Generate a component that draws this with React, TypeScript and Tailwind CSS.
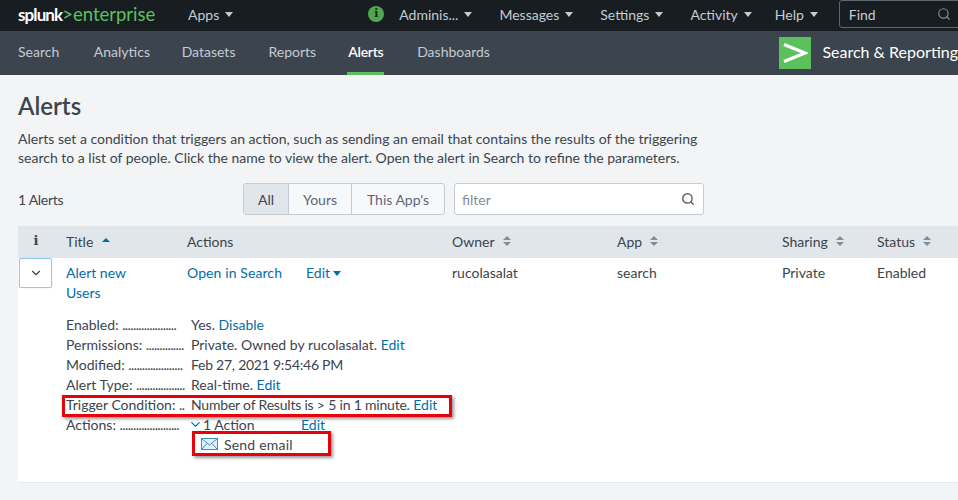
import { ChevronDown, Search } from 'lucide-react';

const font = { fontFamily: 'Lato, "Open Sans", sans-serif' };

function Caret({ className = 'border-t-[#c3cbd4]' }: { className?: string }) {
  return <span className={`inline-block w-0 h-0 border-x-[4px] border-x-transparent border-t-[5px] ${className}`} />;
}

function SortIcon() {
  return (
    <span className="inline-flex flex-col gap-[2px] ml-2">
      <span className="w-0 h-0 border-x-[4px] border-x-transparent border-b-[4px] border-b-[#818d99]" />
      <span className="w-0 h-0 border-x-[4px] border-x-transparent border-t-[4px] border-t-[#818d99]" />
    </span>
  );
}

function TopLink({ label, className = '' }: { label: string; className?: string }) {
  return (
    <div className={`flex items-center gap-[6px] text-[14px] text-[#c3cbd4] ${className}`}>
      <span>{label}</span>
      <Caret />
    </div>
  );
}

function Detail({ label, dots, children }: { label: string; dots: string; children: React.ReactNode }) {
  return (
    <div className="flex h-5 items-center text-[14px] text-[#3c444d] whitespace-nowrap">
      <div className="w-[120px] mr-[5px]">{label} <span className="tracking-[-0.6px]">{dots}</span></div>
      <div>{children}</div>
    </div>
  );
}

const Link = ({ children, className = '' }: { children: React.ReactNode; className?: string }) => (
  <a className={`text-[#006eaa] ${className}`}>{children}</a>
);

export default function App() {
  return (
    <div className="relative w-[958px] h-[500px] overflow-hidden bg-[#f2f4f5]" style={font}>
      <div className="flex items-center h-[31px] bg-[#171d21] pl-[18px] pb-[3px]">
        <div className="w-[170px] shrink-0 leading-none whitespace-nowrap">
          <span className="text-[17px] font-bold tracking-[-0.9px] text-white">splunk</span>
          <span className="text-[18.5px] text-[#5cc05c]">&gt;enterprise</span>
        </div>
        <TopLink label="Apps" />
        <div className="ml-[135px] w-4 h-4 shrink-0 rounded-full bg-[#4fa84f] flex items-center justify-center text-[11px] font-bold text-[#171d21]" style={{ fontFamily: '"DejaVu Serif", serif' }}>i</div>
        <TopLink label="Adminis..." className="ml-[15px]" />
        <TopLink label="Messages" className="ml-[27px]" />
        <TopLink label="Settings" className="ml-[27px]" />
        <TopLink label="Activity" className="ml-[27px]" />
        <TopLink label="Help" className="ml-[23px]" />
        <div className="ml-[21px] shrink-0 flex items-center justify-between w-[125px] h-[28px] border border-[#5c6773] rounded-[3px] pl-[9px] pr-3 text-[14px] text-[#c3cbd4]">
          <span>Find</span>
          <Search size={14} className="text-[#818d99]" />
        </div>
      </div>

      <div className="flex items-center h-[44px] bg-[#3c444d] pl-[18px] text-[14px] text-[#c3cbd4] whitespace-nowrap">
        <span className="w-[76px] pb-[3px]">Search</span>
        <span className="w-[88px] pb-[3px]">Analytics</span>
        <span className="w-[87px] pb-[3px]">Datasets</span>
        <span className="w-[79px] pb-[3px]">Reports</span>
        <span className="w-[70px] h-full flex items-center">
          <span className="h-full flex items-center px-[1px] border-b-[3px] border-[#5cc05c] tracking-[-0.3px] font-semibold text-white">Alerts</span>
        </span>
        <span className="w-[363px] pb-[3px]">Dashboards</span>
        <div className="flex items-center justify-center w-8 h-8 bg-[#5cc05c] shrink-0">
          <svg width="26" height="24" viewBox="0 0 26 24" fill="none">
            <path d="M2 3.5 L23 12 L2 20.5" stroke="#fff" strokeWidth="3.4" />
          </svg>
        </div>
        <span className="ml-[11px] pb-[3px] text-[16px] text-white">Search &amp; Reporting</span>
      </div>

      <div className="pl-[18px]">
        <h1 className="mt-[16px] text-[24px] leading-[30px] font-semibold text-[#3c444d]">Alerts</h1>
        <p className="mt-[8px] w-[700px] text-[14px] leading-[19px] text-[#3c444d]">
          Alerts set a condition that triggers an action, such as sending an email that contains the results of the triggering search to a list of people. Click the name to view the alert. Open the alert in Search to refine the parameters.
        </p>

        <div className="flex items-center h-[32px] mt-[16px] text-[14px] text-[#3c444d]">
          <span className="w-[225px] tracking-[-0.3px]">1 Alerts</span>
          <div className="flex h-[32px] rounded-[3px] border border-[#c3cbd4] bg-[#f7f8fa] overflow-hidden">
            <span className="w-[45px] flex items-center justify-center bg-[#e1e6eb] border-r border-[#c3cbd4]">All</span>
            <span className="w-[63px] flex items-center justify-center text-[#5c6773] border-r border-[#c3cbd4]">Yours</span>
            <span className="w-[92px] flex items-center justify-center text-[#5c6773]">This App's</span>
          </div>
          <div className="ml-[9px] flex items-center justify-between w-[250px] h-[32px] rounded-[3px] border border-[#c3cbd4] bg-white pl-[7px] pr-2 text-[#818d99]">
            <span>filter</span>
            <Search size={14} className="text-[#5c6773]" strokeWidth={2.5} />
          </div>
        </div>

        <div className="mt-[11px] bg-white h-[257px] border-b border-[#e8ebee]">
          <div className="grid grid-cols-[48px_121px_265px_165px_165px_95px_1fr] h-8 pb-[2px] items-center bg-[#e1e6eb] text-[14px] text-[#3c444d] whitespace-nowrap">
            <span className="pr-3 text-center font-bold text-[13px]" style={{ fontFamily: '"DejaVu Serif", serif' }}>i</span>
            <span className="flex items-center">Title<span className="ml-[9px] mb-[3px] w-0 h-0 border-x-[4px] border-x-transparent border-b-[4px] border-b-[#006eaa]" /></span>
            <span>Actions</span>
            <span className="flex items-center">Owner<SortIcon /></span>
            <span className="flex items-center">App<SortIcon /></span>
            <span className="flex items-center">Sharing<SortIcon /></span>
            <span className="flex items-center">Status<SortIcon /></span>
          </div>

          <div className="grid grid-cols-[48px_121px_265px_165px_165px_95px_1fr] text-[14px] leading-5 text-[#3c444d] whitespace-nowrap">
            <div className="pl-[1px]">
              <div className="flex items-center justify-center w-[33px] h-[30px] bg-white border border-[#8fcbf0] rounded-[2px] shadow-[0_0_1px_#8fcbf0]">
                <ChevronDown size={14} className="text-[#3c444d]" />
              </div>
            </div>
            <div className="pt-[5px]"><Link>Alert new<br /><span className="block mt-0">Users</span></Link></div>
            <div className="pt-[5px] flex">
              <Link className="w-[119px] tracking-[0.1px]">Open in Search</Link>
              <Link className="flex items-center gap-[3px] h-5">Edit <Caret className="border-t-[#006eaa]" /></Link>
            </div>
            <div className="pt-[5px]">rucolasalat</div>
            <div className="pt-[5px]">search</div>
            <div className="pt-[5px]">Private</div>
            <div className="pt-[5px]">Enabled</div>
          </div>

          <div className="pl-[48px] mt-[11px]">
            <Detail label="Enabled:" dots="...................."><>Yes. <Link>Disable</Link></></Detail>
            <Detail label="Permissions:" dots="..............">Private. Owned by rucolasalat. <Link>Edit</Link></Detail>
            <Detail label="Modified:" dots="...................."><span className="tracking-[-0.25px]">Feb 27, 2021 9:54:46 PM</span></Detail>
            <Detail label="Alert Type:" dots="..................">Real-time. <Link>Edit</Link></Detail>
            <Detail label="Trigger Condition:" dots="..">
              <span className="tracking-[-0.2px]">Number of Results is &gt; 5 in 1 minute.</span> <Link>Edit</Link>
            </Detail>
            <Detail label="Actions:" dots="......................">
              <span className="flex items-center">
                <ChevronDown size={15} className="text-[#006eaa] -ml-[3px]" />
                <span className="w-[98px]">1 Action</span>
                <Link>Edit</Link>
              </span>
            </Detail>
            <div className="flex h-5 items-center gap-[6px] pl-[135px] text-[14px] tracking-[0.2px] text-[#3c444d]">
              <svg width="17" height="12" viewBox="0 0 17 12" fill="none" stroke="#3b8fc4" strokeWidth="1">
                <rect x="0.5" y="0.5" width="16" height="11" fill="#e3f0f8" />
                <path d="M0.5 0.5 L8.5 7 L16.5 0.5 M0.5 11.5 L6 5.5 M16.5 11.5 L11 5.5" />
              </svg>
              <span>Send email</span>
            </div>
          </div>
        </div>
      </div>

      {/* red annotation boxes drawn over the screenshot */}
      <div className="absolute left-[62px] top-[395px] w-[390px] h-[22px] border-[3px] border-[#e8000b] shadow-[2px_2px_3px_rgba(0,0,0,0.4)]" />
      <div className="absolute left-[192px] top-[431px] w-[139px] h-[25px] border-[3px] border-[#e8000b] shadow-[2px_2px_3px_rgba(0,0,0,0.4)]" />
    </div>
  );
}
